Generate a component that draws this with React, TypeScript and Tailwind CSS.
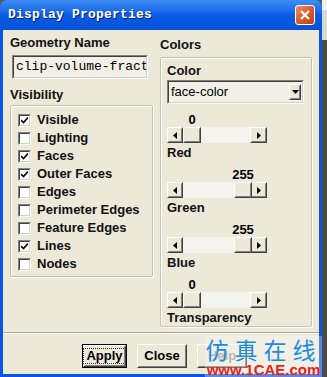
import React from "react";

const sans = { fontFamily: '"Liberation Sans", Arial, sans-serif' };

interface Slider {
    label: string;
    value: number;
}

const sliders: Slider[] = [
    { label: "Red", value: 0 },
    { label: "Green", value: 255 },
    { label: "Blue", value: 255 },
    { label: "Transparency", value: 0 },
];

const visibility = [
    { label: "Visible", checked: true },
    { label: "Lighting", checked: false },
    { label: "Faces", checked: true },
    { label: "Outer Faces", checked: true },
    { label: "Edges", checked: false },
    { label: "Perimeter Edges", checked: false },
    { label: "Feature Edges", checked: false },
    { label: "Lines", checked: true },
    { label: "Nodes", checked: false },
];

function Raised({ className = "", children }: { className?: string; children?: React.ReactNode }) {
    return (
        <div className={`border border-t-white border-l-white border-r-[#404040] border-b-[#404040] bg-[#ece9d8] ${className}`}>
            <div className="w-full h-full border border-t-[#ece9d8] border-l-[#ece9d8] border-r-[#808080] border-b-[#808080] flex items-center justify-center">
                {children}
            </div>
        </div>
    );
}

function Arrow({ dir }: { dir: "left" | "right" | "down" }) {
    if (dir === "down") {
        return (
            <svg width="7" height="4" viewBox="0 0 7 4">
                <path d="M0 0h7L3.5 4z" fill="#000" />
            </svg>
        );
    }
    return (
        <svg width="4" height="7" viewBox="0 0 4 7">
            {dir === "left" ? <path d="M4 0v7L0 3.5z" fill="#000" /> : <path d="M0 0v7l4-3.5z" fill="#000" />}
        </svg>
    );
}

function ScrollSlider({ s }: { s: Slider }) {
    // thumb travels between the arrow buttons
    const left = 16 + Math.round((s.value / 255) * 51);
    return (
        <div className="flex flex-col">
            <div className="relative h-[14px]">
                <span
                    className="absolute top-[-3px] text-[13px] font-bold text-black -translate-x-1/2"
                    style={{ left: left + 9 }}
                >
                    {s.value}
                </span>
            </div>
            <div className="relative flex w-[100px] h-[16px] bg-[#f4f3ee]">
                <Raised className="w-[16px] h-[16px]">
                    <Arrow dir="left" />
                </Raised>
                <div className="flex-1" />
                <Raised className="w-[17px] h-[16px]">
                    <Arrow dir="right" />
                </Raised>
                <div className="absolute top-0 h-[16px]" style={{ left }}>
                    <Raised className="w-[18px] h-[16px]" />
                </div>
            </div>
            <div className="text-[13px] font-bold leading-[16px] mt-[2px] text-[#111]">{s.label}</div>
        </div>
    );
}

export default function App() {
    return (
        <div className="w-[327px] h-[377px] flex bg-[#5a5a5a] overflow-hidden" style={sans}>
            <div className="w-[322px] h-[377px] flex flex-col bg-[#0a56e0] rounded-t-[7px]">
                {/* title bar */}
                <div className="h-[30px] flex items-center justify-between pl-[8px] pr-[7px] rounded-t-[7px] bg-gradient-to-b from-[#3f8ef5] via-[#0a5ce6] to-[#0452d8]">
                    <span
                        className="text-white text-[13px] font-bold tracking-[0.2px] [text-shadow:1px_1px_0_#0a1a70]"
                        style={{ fontFamily: '"Liberation Mono", "Courier New", monospace' }}
                    >
                        Display Properties
                    </span>
                    <div className="w-[20px] h-[20px] rounded-[3px] border border-white bg-gradient-to-br from-[#ec8f6c] via-[#db5a2f] to-[#c63f16] flex items-center justify-center">
                        <svg width="10" height="10" viewBox="0 0 10 10">
                            <path d="M1 1l8 8M9 1l-8 8" stroke="#fff" strokeWidth="2.2" />
                        </svg>
                    </div>
                </div>

                {/* body */}
                <div className="flex-1 mx-[3px] mb-[3px] bg-[#ece9d8] flex flex-col relative">
                    <div className="flex px-[7px] h-[302px]">
                        {/* left column */}
                        <div className="w-[143px] flex flex-col">
                            <div className="mt-[5px] text-[13px] font-bold leading-[16px] text-[#111]">Geometry Name</div>
                            <div className="mt-[4px] ml-[2px] w-[136px] h-[24px] border border-t-[#808080] border-l-[#808080] border-r-white border-b-white">
                                <div className="w-full h-full border border-t-[#404040] border-l-[#404040] border-r-[#d4d0c8] border-b-[#d4d0c8] bg-[#f2f0e6] flex items-center pl-[2px] overflow-hidden">
                                    <span className="text-[13px] whitespace-nowrap text-black" style={{ fontFamily: '"Liberation Mono", "Courier New", monospace' }}>
                                        clip-volume-fraction
                                    </span>
                                </div>
                            </div>
                            <div className="mt-[8px] text-[13px] font-bold leading-[16px] text-[#111]">Visibility</div>
                            <div className="mt-[2px] h-[172px] border border-[#c5c2b2] rounded-[2px] shadow-[inset_1px_1px_0_#fff,1px_1px_0_#fff] flex flex-col pt-[5px] pl-[7px]">
                                {visibility.map((v) => (
                                    <div key={v.label} className="h-[18px] flex items-center gap-[6px]">
                                        <div className="w-[13px] h-[13px] border border-t-[#808080] border-l-[#808080] border-r-white border-b-white">
                                            <div className="w-full h-full border border-t-[#404040] border-l-[#404040] border-r-[#d4d0c8] border-b-[#d4d0c8] bg-white flex items-center justify-center">
                                                {v.checked && (
                                                    <svg width="7" height="7" viewBox="0 0 7 7">
                                                        <path d="M0 3l2.5 2.5L7 0.5" stroke="#000" strokeWidth="1.6" fill="none" />
                                                    </svg>
                                                )}
                                            </div>
                                        </div>
                                        <span className="text-[13px] font-bold text-[#111]">{v.label}</span>
                                    </div>
                                ))}
                            </div>
                        </div>

                        {/* right column */}
                        <div className="ml-[7px] flex-1 flex flex-col">
                            <div className="mt-[7px] text-[13px] font-bold leading-[16px] text-[#111]">Colors</div>
                            <div className="mt-[4px] w-[152px] h-[270px] border border-[#c5c2b2] rounded-[2px] shadow-[inset_1px_1px_0_#fff,1px_1px_0_#fff] flex flex-col pl-[6px]">
                                <div className="mt-[5px] text-[13px] font-bold leading-[16px] text-[#111]">Color</div>
                                <div className="mt-[1px] w-[137px] h-[25px] border border-t-[#808080] border-l-[#808080] border-r-white border-b-white">
                                    <div className="w-full h-full border border-t-[#404040] border-l-[#404040] border-r-[#d4d0c8] border-b-[#d4d0c8] bg-[#f2f0e6] flex items-center justify-between pl-[2px] pr-[1px]">
                                        <span className="text-[13px] text-black">face-color</span>
                                        <Raised className="w-[12px] h-[16px]">
                                            <Arrow dir="down" />
                                        </Raised>
                                    </div>
                                </div>
                                <div className="mt-[9px] flex flex-col gap-[7px]">
                                    {sliders.map((s) => (
                                        <ScrollSlider key={s.label} s={s} />
                                    ))}
                                </div>
                            </div>
                        </div>
                    </div>

                    {/* separator */}
                    <div className="h-[2px] border-t border-[#aca899] border-b border-b-white" />

                    {/* buttons */}
                    <div className="flex pl-[79px] pt-[10px] gap-[10px]">
                        <div className="w-[45px] h-[24px] border border-black">
                            <Raised className="w-full h-full">
                                <span className="px-[2px] border border-dotted border-[#333] text-[13px] font-bold leading-[14px]">Apply</span>
                            </Raised>
                        </div>
                        <Raised className="w-[50px] h-[24px]">
                            <span className="text-[13px] font-bold">Close</span>
                        </Raised>
                        <Raised className="w-[50px] h-[24px]">
                            <span className="text-[13px] font-bold text-[#9a9890]">Help</span>
                        </Raised>
                    </div>

                    {/* watermark */}
                    <div className="absolute right-[-3px] bottom-[-3px] w-[117px] h-[41px] bg-white/30 flex flex-col items-center">
                        <span
                            className="text-[23px] leading-[26px] tracking-[6px] text-[#1b8ce6]"
                            style={{ fontFamily: '"Noto Sans CJK SC", sans-serif' }}
                        >
                            仿真在线
                        </span>
                        <span className="text-[15px] font-bold leading-[15px] text-[#e3231b]">www.1CAE.com</span>
                    </div>
                </div>
            </div>
            <div className="flex-1 flex flex-col">
                <div className="h-[10px] bg-[#f0f0f0]" />
                <div className="h-[30px] bg-[#d8d8d8]" />
                <div className="flex-1 bg-[#4a4a4a]" />
            </div>
        </div>
    );
}
